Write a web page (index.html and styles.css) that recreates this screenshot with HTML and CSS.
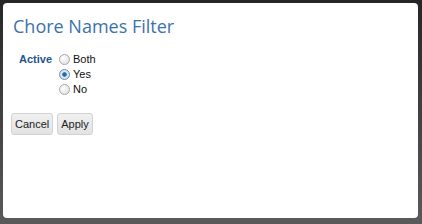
FILE: index.html
```html
<!DOCTYPE html>
<html lang="en">
<head>
    <meta charset="UTF-8">
    <title>Chore Names Filter</title>
    <link rel="stylesheet" href="styles.css">
</head>
<body>
    <div class="dialog">
        <h1>Chore Names Filter</h1>
        <div class="field">
            <span class="field-label">Active</span>
            <div class="options">
                <label><input type="radio" name="active" value="both"> Both</label>
                <label><input type="radio" name="active" value="yes" checked> Yes</label>
                <label><input type="radio" name="active" value="no"> No</label>
            </div>
        </div>
        <div class="button-group">
            <button>Cancel</button>
            <button>Apply</button>
        </div>
    </div>
</body>
</html>
```

FILE: styles.css
```css
* {
    box-sizing: border-box;
    margin: 0;
    padding: 0;
}

body {
    font-family: Arial, 'Liberation Sans', sans-serif;
    width: 422px;
    height: 224px;
    background: linear-gradient(to bottom, #262626 0%, #3c3c3c 40%, #5a5a5a 100%);
    padding: 3px 4px 6px 3px;
}

.dialog {
    height: 100%;
    background: #fff;
    border-radius: 4px;
    padding: 10px 8px;
}

h1 {
    font-family: 'Open Sans', sans-serif;
    font-weight: normal;
    font-size: 18px;
    color: #3b72ab;
    margin-left: 2px;
    line-height: 26px;
}

.field {
    display: flex;
    margin-top: 14px;
    margin-left: 8px;
}

.field-label {
    font-size: 11px;
    font-weight: bold;
    color: #23558c;
    width: 40px;
}

.options {
    display: flex;
    flex-direction: column;
    gap: 3px;
}

.options label {
    display: flex;
    align-items: center;
    font-size: 11px;
    color: #111;
    height: 12px;
}

.options input {
    appearance: none;
    width: 11px;
    height: 11px;
    margin-right: 3px;
    border: 1px solid #a8a8a8;
    border-radius: 50%;
    background: radial-gradient(circle at 35% 35%, #fff 0%, #e6e6e6 70%, #d4d4d4 100%);
}

.options input:checked {
    border-color: #6f8fae;
    background: radial-gradient(circle, #1f5f9c 0%, #2b78bd 30%, #dfe8f0 42%, #cfd8e0 100%);
}

.button-group {
    display: flex;
    gap: 4px;
    margin-top: 18px;
}

button {
    font-family: Arial, 'Liberation Sans', sans-serif;
    font-size: 11px;
    color: #222;
    background: linear-gradient(to bottom, #f0f0f0, #e2e2e2);
    border: 1px solid #d2d2d2;
    border-radius: 3px;
    padding: 0 3px;
    height: 22px;
}
```
